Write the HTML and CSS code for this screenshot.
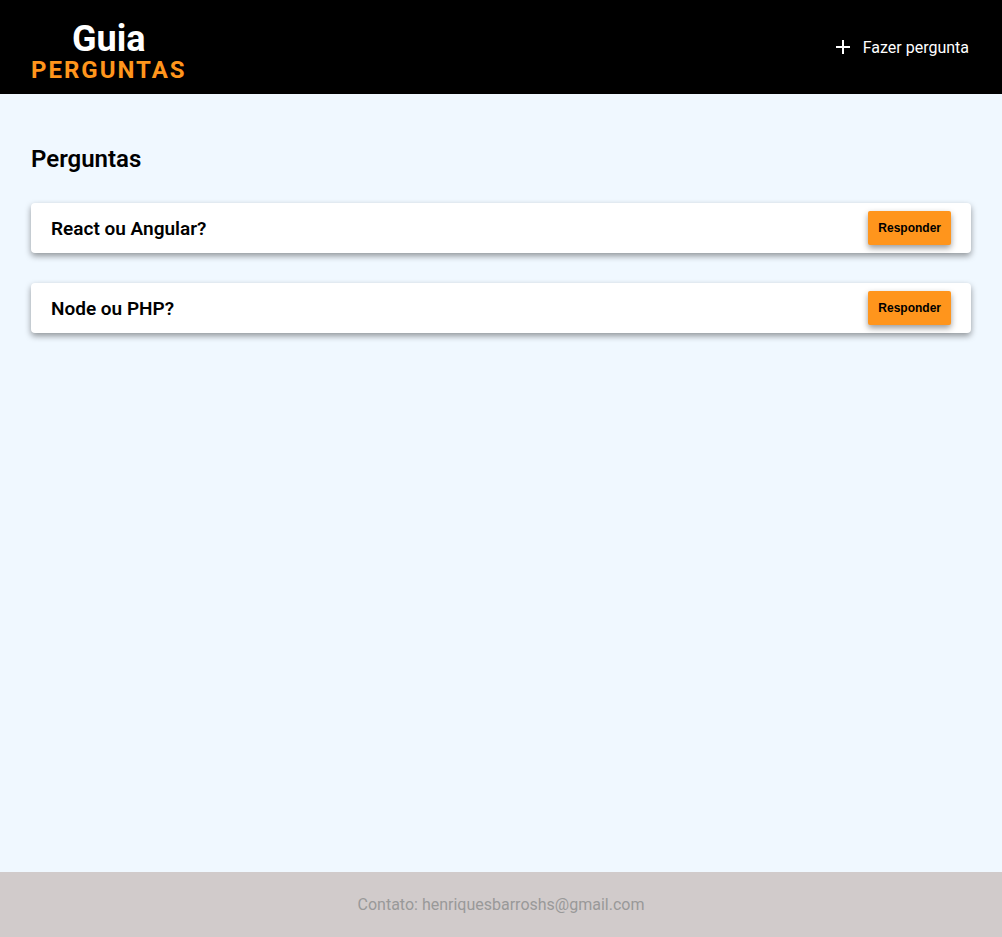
FILE: index.html
```
<!DOCTYPE html>
<html lang="pt-BR">
<head>
  <meta charset="utf-8">
  <meta name="viewport" content="width=device-width, initial-scale=1">
  <title>Guia Perguntas</title>
  <link rel="stylesheet" href="styles.css">
</head>
<body>
  <header class="header">
    <a class="logo" href="#">
      <span class="logo-title">Guia</span>
      <span class="logo-subtitle">PERGUNTAS</span>
    </a>
    <a class="ask" href="#">
      <svg class="ask-icon" viewBox="0 0 24 24" aria-hidden="true"><path d="M19 13h-6v6h-2v-6H5v-2h6V5h2v6h6v2z"/></svg>
      <span>Fazer pergunta</span>
    </a>
  </header>
  <main class="main">
    <h1 class="title">Perguntas</h1>
    <ul class="questions">
      <li class="question">
        <h2 class="question-title">React ou Angular?</h2>
        <button class="answer" type="button">Responder</button>
      </li>
      <li class="question">
        <h2 class="question-title">Node ou PHP?</h2>
        <button class="answer" type="button">Responder</button>
      </li>
    </ul>
  </main>
  <footer class="footer">Contato: henriquesbarroshs@gmail.com</footer>
</body>
</html>
```
FILE: styles.css
```
* {
  box-sizing: border-box;
  margin: 0;
  padding: 0;
}

body {
  display: flex;
  flex-direction: column;
  min-height: 100vh;
  background: #f0f8ff;
  color: #000;
  font-family: Roboto, sans-serif;
  font-size: 16px;
}

.header {
  display: flex;
  align-items: center;
  justify-content: space-between;
  padding: 12px 33px 12px 31px;
  background: #000;
}

.logo {
  display: flex;
  flex-direction: column;
  align-items: center;
  padding-top: 8px;
  font-weight: 700;
  text-decoration: none;
}

.logo-title {
  color: #fff;
  font-size: 36px;
  line-height: 38px;
}

.logo-subtitle {
  color: #ff951c;
  font-size: 24px;
  line-height: 24px;
  letter-spacing: 2px;
}

.ask {
  display: flex;
  align-items: center;
  gap: 8px;
  color: #fff;
  text-decoration: none;
}

.ask-icon {
  width: 24px;
  height: 24px;
  fill: currentColor;
}

.main {
  flex: 1;
  padding: 50px 31px;
}

.title {
  font-size: 24px;
  font-weight: 600;
  line-height: 30px;
}

.questions {
  display: grid;
  gap: 30px;
  margin-top: 29px;
  list-style: none;
}

.question {
  display: flex;
  align-items: center;
  justify-content: space-between;
  padding: 8px 20px;
  border-radius: 4px;
  background: #fff;
  box-shadow: 0 3px 6px rgba(0, 0, 0, 0.4);
}

.question-title {
  font-size: 19px;
  font-weight: 600;
}

.answer {
  padding: 10px;
  border: 0;
  border-radius: 2px;
  background: #ff951c;
  box-shadow: 0 3px 6px rgba(0, 0, 0, 0.4);
  color: #000;
  font: 700 12px/14px "Liberation Sans", Arial, sans-serif;
  cursor: pointer;
}

.footer {
  padding: 23px 16px;
  background: #d1cbcb;
  color: #999;
  line-height: 19px;
  text-align: center;
}
```
